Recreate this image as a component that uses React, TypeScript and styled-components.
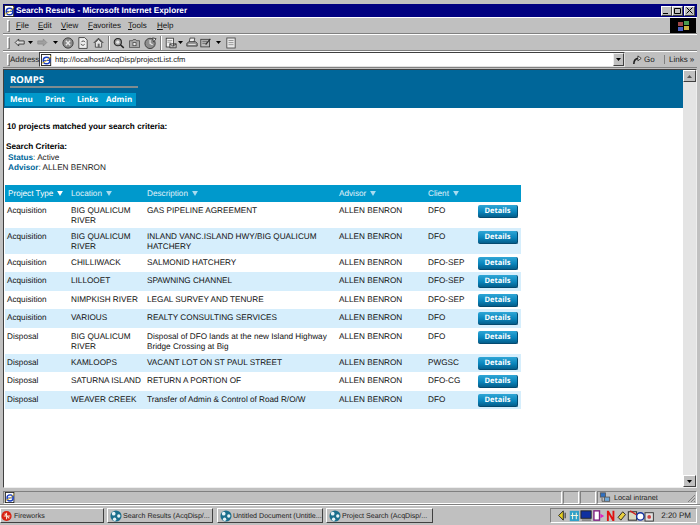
import React from 'react';
import styled, { createGlobalStyle, css } from 'styled-components';

const GlobalStyle = createGlobalStyle`
  html, body {
    margin: 0;
    padding: 0;
    background: #c0c0c0;
  }
  * {
    box-sizing: border-box;
  }
  svg {
    flex: none;
  }
`;

const raised = css`
  border: 1px solid;
  border-color: #ffffff #808080 #808080 #ffffff;
`;

const sunken = css`
  border: 1px solid;
  border-color: #808080 #ffffff #ffffff #808080;
`;

const Screen = styled.div`
  width: 700px;
  height: 525px;
  overflow: hidden;
  display: flex;
  flex-direction: column;
  background: #c0c0c0;
  font-family: 'Liberation Sans', Arial, sans-serif;
  font-size: 8.2px;
  color: #000;
  text-rendering: geometricPrecision;
`;

const Window = styled.div`
  flex: 1;
  display: flex;
  flex-direction: column;
  padding: 4px 3px 0;
  border-bottom: 1px solid #808080;
  min-height: 0;
`;

const TitleBar = styled.div`
  height: 13px;
  flex: none;
  background: #000080;
  color: #fff;
  font-weight: bold;
  font-size: 8.2px;
  display: flex;
  align-items: center;
  padding: 0 2px 0 1px;
`;

const TitleText = styled.span`
  flex: 1;
  white-space: nowrap;
`;

const CaptionButton = styled.div<{ $gap?: boolean }>`
  width: 11px;
  height: 10px;
  margin-left: ${p => (p.$gap ? 1 : 0)}px;
  background: #c0c0c0;
  border: 1px solid;
  border-color: #fff #404040 #404040 #fff;
  display: flex;
  align-items: center;
  justify-content: center;
`;

const CaptionRow = styled.div`
  display: flex;
`;

const Bar = styled.div<{ $h: number }>`
  height: ${p => p.$h}px;
  flex: none;
  display: flex;
  align-items: center;
  border-top: 1px solid #fff;
  border-bottom: 1px solid #808080;
`;

const Grip = styled.div`
  width: 3px;
  height: 12px;
  margin: 0 3px 0 4px;
  ${raised};
  flex: none;
`;

const MenuItem = styled.span<{ $w: number }>`
  width: ${p => p.$w}px;
  flex: none;
  font-size: 8px;
  color: #111;
  u {
    text-decoration: underline;
  }
`;

const MenuRow = styled.div`
  flex: 1;
  display: flex;
  align-items: center;
  padding-left: 3px;
`;

const Flag = styled.div`
  width: 26px;
  height: 15px;
  background: #000;
  flex: none;
  margin-right: 1px;
  display: flex;
  align-items: center;
  justify-content: center;
`;

const Tools = styled.div`
  display: flex;
  align-items: center;
`;

const ToolSlot = styled.div<{ $w: number }>`
  width: ${p => p.$w}px;
  flex: none;
  display: flex;
  justify-content: center;
  align-items: center;
`;

const ToolDivider = styled.div`
  width: 2px;
  height: 14px;
  margin: 0 3px 0 2px;
  border-left: 1px solid #808080;
  border-right: 1px solid #fff;
  flex: none;
`;

const AddressLabel = styled.span`
  width: 29px;
  margin-left: -3px;
  flex: none;
  font-size: 8px;
  color: #222;
`;

const AddressInput = styled.div`
  flex: 1;
  height: 15px;
  background: #fff;
  border: 1px solid;
  border-color: #404040 #e0e0e0 #e0e0e0 #404040;
  display: flex;
  align-items: center;
  font-size: 7.6px;
  color: #222;
  gap: 2px;
  padding-left: 1px;
`;

const AddressText = styled.span`
  flex: 1;
  white-space: nowrap;
`;

const DropButton = styled.div`
  width: 11px;
  height: 13px;
  background: #c0c0c0;
  border: 1px solid;
  border-color: #eee #404040 #404040 #eee;
  display: flex;
  align-items: center;
  justify-content: center;
`;

const GoBox = styled.div`
  width: 35px;
  margin-left: 2px;
  flex: none;
  display: flex;
  align-items: center;
  gap: 2px;
  padding-left: 6px;
  font-size: 8px;
  color: #222;
`;

const LinksBox = styled.div`
  width: 33px;
  flex: none;
  margin-left: 2px;
  display: flex;
  align-items: center;
  border-left: 1px solid #808080;
  font-size: 8px;
  color: #222;
  padding-left: 4px;
  gap: 2px;
`;

const Frame = styled.div`
  flex: 1;
  min-height: 0;
  margin-top: 1px;
  display: flex;
  border: 1px solid;
  border-color: #404040 #eee #eee #404040;
`;

const Page = styled.div`
  flex: 1;
  background: #fff;
  overflow: hidden;
  min-width: 0;
`;

const Banner = styled.div`
  height: 38px;
  background: #006699;
  color: #fff;
  padding-top: 5px;
`;

const Brand = styled.div`
  margin-left: 6px;
  width: 128px;
  height: 13px;
  font-size: 9.5px;
  font-weight: bold;
  line-height: 9px;
  border-bottom: 2px solid #7f8c90;
  font-family: 'Open Sans', 'Liberation Sans', sans-serif;
`;

const Nav = styled.div`
  margin: 5px 0 0 1px;
  width: 131px;
  height: 13px;
  background: #0099cc;
  display: flex;
  align-items: center;
  padding-left: 5px;
  font-size: 8px;
  font-weight: bold;
  font-family: 'Open Sans', 'Liberation Sans', sans-serif;
`;

const NavItem = styled.span<{ $w: number }>`
  width: ${p => p.$w}px;
  flex: none;
`;

const Content = styled.div`
  padding: 13px 1px 0 1px;
`;

const Matched = styled.div`
  font-weight: bold;
  line-height: 12px;
  padding-left: 2px;
`;

const CriteriaBlock = styled.div`
  margin-top: 9px;
  line-height: 10.5px;
  padding-left: 1px;
`;

const CriteriaTitle = styled.div`
  font-weight: bold;
`;

const CriteriaLine = styled.div`
  padding-left: 2px;
  color: #222;
  b {
    color: #006699;
  }
`;

const Table = styled.div`
  width: 516px;
  margin-top: 11px;
`;

const gridColumns = css`
  display: grid;
  grid-template-columns: 65px 76px 192px 89px 50px 44px;
`;

const HeadRow = styled.div`
  ${gridColumns};
  height: 17px;
  background: #0099cc;
  color: #fff;
  align-items: center;
`;

const HeadCell = styled.div<{ $first?: boolean }>`
  padding-left: ${p => (p.$first ? 3 : 1)}px;
  display: flex;
  align-items: center;
  gap: 4px;
  white-space: nowrap;
  color: ${p => (p.$first ? '#fff' : '#e0f2fa')};
`;

const Row = styled.div<{ $alt: boolean; $h: number }>`
  ${gridColumns};
  height: ${p => p.$h}px;
  padding-top: 3px;
  background: ${p => (p.$alt ? '#d6eefc' : '#ffffff')};
  line-height: 10px;
  color: #111;
`;

const Cell = styled.div<{ $first?: boolean }>`
  padding-left: ${p => (p.$first ? 2 : 1)}px;
  padding-top: 1px;
`;

const DetailsButton = styled.div`
  width: 40px;
  height: 13px;
  margin-left: 1px;
  border-radius: 2px;
  background: linear-gradient(#2fa6d6, #0a86bd 55%, #055f8c);
  border-right: 1px solid #044a70;
  border-bottom: 1px solid #044a70;
  color: #fff;
  font-size: 7.5px;
  font-weight: bold;
  display: flex;
  align-items: center;
  justify-content: center;
  font-family: 'Open Sans', 'Liberation Sans', sans-serif;
`;

const ScrollBar = styled.div`
  width: 13px;
  flex: none;
  display: flex;
  flex-direction: column;
  background-color: #e4e4e4;
`;

const ScrollTrack = styled.div`
  flex: 1;
`;

const ScrollButton = styled.div`
  height: 12px;
  background: #c0c0c0;
  border: 1px solid;
  border-color: #fff #404040 #404040 #fff;
  display: flex;
  align-items: center;
  justify-content: center;
`;

const StatusBar = styled.div`
  height: 13px;
  flex: none;
  margin-top: 3px;
  display: flex;
  align-items: stretch;
  gap: 1px;
`;

const StatusCell = styled.div<{ $w?: number }>`
  ${sunken};
  ${p => (p.$w ? `width: ${p.$w}px; flex: none;` : 'flex: 1;')}
  display: flex;
  align-items: center;
  gap: 3px;
  font-size: 7.3px;
  color: #222;
  white-space: nowrap;
  padding-left: 1px;
`;

const SizeGrip = styled.svg`
  margin-left: auto;
`;

const TaskBar = styled.div`
  height: 20px;
  flex: none;
  display: flex;
  align-items: center;
  border-top: 1px solid #fff;
`;

const TaskButton = styled.div<{ $w: number; $ml: number }>`
  width: ${p => p.$w}px;
  margin-left: ${p => p.$ml}px;
  height: 15px;
  flex: none;
  border: 1px solid;
  border-color: #fff #404040 #404040 #fff;
  display: flex;
  align-items: center;
  gap: 1px;
  padding-left: ${p => (p.$ml ? 2 : 0)}px;
  font-size: 7.1px;
  color: #222;
  white-space: nowrap;
  overflow: hidden;
`;

const Tray = styled.div`
  margin: 0 3px 0 auto;
  width: 147px;
  height: 15px;
  ${sunken};
  display: flex;
  align-items: center;
  padding-left: 3px;
  gap: 1px;
`;

const Clock = styled.span`
  margin-left: auto;
  margin-right: 5px;
  font-size: 8px;
  color: #222;
  white-space: nowrap;
`;

// small hand-drawn icons
const IeIcon = ({ size = 12 }: { size?: number }) => (
  <svg width={size} height={size} viewBox="0 0 13 13">
    <rect x="0.5" y="0.5" width="10" height="12" fill="#fff" stroke="#222" />
    <circle cx="6" cy="7" r="3.6" fill="none" stroke="#1a3fc0" strokeWidth="1.6" />
    <path d="M2.5 7h7" stroke="#1a3fc0" />
    <path d="M1 10Q7 8 11 2" stroke="#d8b020" fill="none" />
  </svg>
);

const Triangle = ({ dim }: { dim?: boolean }) => (
  <svg width="6" height="5" viewBox="0 0 7 6">
    <path d="M0 0h7L3.5 6z" fill={dim ? '#a8dcf0' : '#fff'} />
  </svg>
);

const BlackDown = () => (
  <svg width="5" height="3" viewBox="0 0 5 3">
    <path d="M0 0h5L2.5 3z" fill="#000" />
  </svg>
);

const BackIcon = () => (
  <svg width="11" height="9" viewBox="0 0 14 11">
    <path d="M6 1L1.5 5.5 6 10V7.5h7v-4H6z" fill="#d8d8d8" stroke="#222" />
  </svg>
);

const ForwardIcon = () => (
  <svg width="11" height="9" viewBox="0 0 14 11">
    <path d="M8 1l4.5 4.5L8 10V7.5H1v-4h7z" fill="#a0a0a0" stroke="#8a8a8a" />
  </svg>
);

const StopIcon = () => (
  <svg width="12" height="12" viewBox="0 0 14 14">
    <circle cx="7" cy="7" r="6" fill="#8a8a8a" stroke="#333" />
    <path d="M4.5 4.5l5 5M9.5 4.5l-5 5" stroke="#e8e8e8" strokeWidth="1.6" />
  </svg>
);

const RefreshIcon = () => (
  <svg width="10" height="12" viewBox="0 0 12 14">
    <path d="M1 .5h7l3 3v10H1z" fill="#eee" stroke="#333" />
    <path d="M4 6a2.5 2.5 0 0 1 4.5 0M8 8.5A2.5 2.5 0 0 1 3.5 8" stroke="#333" fill="none" />
  </svg>
);

const HomeIcon = () => (
  <svg width="11" height="11" viewBox="0 0 14 13">
    <path d="M1 7l6-6 6 6" fill="none" stroke="#222" strokeWidth="1.2" />
    <path d="M3 6.5V12.5h8V6.5L7 2.5z" fill="#e4e4e4" stroke="#333" />
    <rect x="6" y="8" width="2.5" height="4.5" fill="#666" />
  </svg>
);

const SearchIcon = () => (
  <svg width="12" height="12" viewBox="0 0 15 14">
    <circle cx="6" cy="6" r="4.5" fill="#9a9a9a" stroke="#222" strokeWidth="1.3" />
    <circle cx="6" cy="6" r="2" fill="#e8e8e8" />
    <path d="M9.5 9.5l4 3.5" stroke="#222" strokeWidth="2" />
  </svg>
);

const FolderIcon = () => (
  <svg width="11" height="10" viewBox="0 0 14 13">
    <path d="M.5 3.5h4l1-1.5h3l1 1.5h4v9H.5z" fill="#a8a8a8" stroke="#444" />
    <rect x="5" y="6" width="4" height="4" fill="#eee" stroke="#444" />
  </svg>
);

const HistoryIcon = () => (
  <svg width="13" height="12" viewBox="0 0 15 14">
    <circle cx="7" cy="7.5" r="6" fill="#8e8e8e" stroke="#333" />
    <path d="M7 3.5v4l3 1.5" stroke="#eee" strokeWidth="1.3" fill="none" />
    <path d="M10 1l4 1-3 4z" fill="#eee" stroke="#333" />
  </svg>
);

const MailIcon = () => (
  <svg width="12" height="12" viewBox="0 0 15 14">
    <rect x="1.5" y="1" width="9" height="11" fill="#f2f2f2" stroke="#333" />
    <path d="M3 4h6M3 6h5" stroke="#888" />
    <path d="M6 8h8v5H6zM6 8l4 3 4-3" fill="#bbb" stroke="#333" />
  </svg>
);

const PrintIcon = () => (
  <svg width="12" height="11" viewBox="0 0 15 13">
    <path d="M5 1h6l-1 5H4z" fill="#eee" stroke="#333" />
    <path d="M1 7.5L4 5.5h8l2 2v3.5H1z" fill="#999" stroke="#333" />
    <path d="M3 9h9" stroke="#eee" />
  </svg>
);

const EditIcon = () => (
  <svg width="12" height="11" viewBox="0 0 15 13">
    <rect x="1" y="2.5" width="11" height="9.5" fill="#bbb" stroke="#333" />
    <path d="M3 5h6M3 7.5h4" stroke="#555" />
    <path d="M7 9l6-7" stroke="#333" strokeWidth="1.6" />
  </svg>
);

const DiscussIcon = () => (
  <svg width="10" height="12" viewBox="0 0 12 14">
    <rect x="1" y="1" width="10" height="12" fill="#e8e8e8" stroke="#444" />
    <path d="M3 4h6M3 6.5h6M3 9h6" stroke="#888" />
  </svg>
);

const GoIcon = () => (
  <svg width="9" height="10" viewBox="0 0 11 12">
    <path d="M1 11C1 6 4 4 7 4" fill="none" stroke="#222" strokeWidth="2" />
    <path d="M6 1l4 3-4 3z" fill="#eee" stroke="#222" />
  </svg>
);

const WinFlag = () => (
  <svg width="13" height="12" viewBox="0 0 13 12">
    <rect x="1" y="2" width="5" height="4" fill="#a04848" />
    <rect x="7" y="1" width="5" height="4" fill="#4a9a50" />
    <rect x="1" y="7" width="5" height="4" fill="#4a60c0" />
    <rect x="7" y="6" width="5" height="4" fill="#c8b040" />
  </svg>
);

const DreamweaverIcon = () => (
  <svg width="12" height="12" viewBox="0 0 13 13">
    <circle cx="6.5" cy="6.5" r="6" fill="#1c6f8c" />
    <circle cx="4" cy="4" r="2" fill="#e8f4f8" />
    <circle cx="9.5" cy="6.5" r="1.8" fill="#e8f4f8" />
    <circle cx="5" cy="10" r="1.8" fill="#e8f4f8" />
  </svg>
);

const FireworksIcon = () => (
  <svg width="12" height="12" viewBox="0 0 13 13">
    <circle cx="6" cy="6.5" r="5.5" fill="#d82010" />
    <path d="M3 6.5h7M6 3v7M4 4l5 5" stroke="#f8e0d0" strokeWidth="1.2" />
  </svg>
);

const IntranetIcon = () => (
  <svg width="12" height="11" viewBox="0 0 13 13">
    <rect x="1" y="1" width="6" height="5" fill="#3070c0" stroke="#555" />
    <rect x="6" y="6" width="6" height="5" fill="#70a8d8" stroke="#555" />
    <path d="M3 7v4h3" stroke="#555" fill="none" />
  </svg>
);

const TrayIcons = () => (
  <svg width="104" height="13" viewBox="0 0 104 14">
    <path d="M1 7l5-5v10z" fill="#e8d020" stroke="#222" />
    <path d="M8 4v6" stroke="#222" />
    <rect x="13" y="2" width="10" height="11" fill="#30a0c8" />
    <path d="M16 4v7M20 4v7M14 7h8" stroke="#fffbe0" />
    <rect x="25" y="2" width="11" height="8" fill="#1030a0" stroke="#222" />
    <rect x="26" y="11" width="10" height="2" fill="#888" />
    <rect x="39" y="2" width="6" height="10" fill="#fff" stroke="#802080" strokeWidth="1.5" />
    <path d="M46 5l4 2.5-4 2.5z" fill="#e020c0" />
    <path d="M53 13V2h2l4 7V2h2v11h-2l-4-7v7z" fill="#e01010" />
    <path d="M65 9l5-6 3 3-5 6z" fill="#e8d040" stroke="#222" />
    <rect x="76" y="3" width="9" height="9" fill="#d8d8c0" stroke="#222" />
    <path d="M78 2l8 5" stroke="#d02020" strokeWidth="1.5" />
    <circle cx="89" cy="8" r="4" fill="#fff" stroke="#1030a0" strokeWidth="1.5" />
    <rect x="94" y="4" width="9" height="9" fill="#e0e0e0" stroke="#333" />
    <circle cx="98.5" cy="8.5" r="2" fill="#d04040" />
  </svg>
);

interface IProject {
  type: string
  location: string
  description: string
  advisor: string
  client: string
  height: number
}

const projects: IProject[] = [
  { type: 'Acquisition', location: 'BIG QUALICUM RIVER', description: 'GAS PIPELINE AGREEMENT', advisor: 'ALLEN BENRON', client: 'DFO', height: 26 },
  { type: 'Acquisition', location: 'BIG QUALICUM RIVER', description: 'INLAND VANC.ISLAND HWY/BIG QUALICUM HATCHERY', advisor: 'ALLEN BENRON', client: 'DFO', height: 26 },
  { type: 'Acquisition', location: 'CHILLIWACK', description: 'SALMONID HATCHERY', advisor: 'ALLEN BENRON', client: 'DFO-SEP', height: 18.5 },
  { type: 'Acquisition', location: 'LILLOOET', description: 'SPAWNING CHANNEL', advisor: 'ALLEN BENRON', client: 'DFO-SEP', height: 18.5 },
  { type: 'Acquisition', location: 'NIMPKISH RIVER', description: 'LEGAL SURVEY AND TENURE', advisor: 'ALLEN BENRON', client: 'DFO-SEP', height: 18.5 },
  { type: 'Acquisition', location: 'VARIOUS', description: 'REALTY CONSULTING SERVICES', advisor: 'ALLEN BENRON', client: 'DFO', height: 18.5 },
  { type: 'Disposal', location: 'BIG QUALICUM RIVER', description: 'Disposal of DFO lands at the new Island Highway Bridge Crossing at Big', advisor: 'ALLEN BENRON', client: 'DFO', height: 26 },
  { type: 'Disposal', location: 'KAMLOOPS', description: 'VACANT LOT ON ST PAUL STREET', advisor: 'ALLEN BENRON', client: 'PWGSC', height: 18.5 },
  { type: 'Disposal', location: 'SATURNA ISLAND', description: 'RETURN A PORTION OF', advisor: 'ALLEN BENRON', client: 'DFO-CG', height: 18.5 },
  { type: 'Disposal', location: 'WEAVER CREEK', description: 'Transfer of Admin & Control of Road R/O/W', advisor: 'ALLEN BENRON', client: 'DFO', height: 18.5 },
];

const menus = [
  { key: 'F', rest: 'ile', width: 22 },
  { key: 'E', rest: 'dit', width: 23 },
  { key: 'V', rest: 'iew', width: 27 },
  { key: 'F', rest: 'avorites', width: 40 },
  { key: 'T', rest: 'ools', width: 29 },
  { key: 'H', rest: 'elp', width: 30 },
];

const App = () => {
  return (
    <Screen>
      <GlobalStyle />
      <Window>
        <TitleBar>
          <IeIcon />
          <TitleText>Search Results - Microsoft Internet Explorer</TitleText>
          <CaptionRow>
            <CaptionButton>
              <svg width="7" height="7" viewBox="0 0 7 7"><path d="M0 6h5v1H0z" fill="#000" /></svg>
            </CaptionButton>
            <CaptionButton>
              <svg width="7" height="7" viewBox="0 0 7 7"><path d="M.5 1.5h6v5h-6z" fill="none" stroke="#000" /></svg>
            </CaptionButton>
            <CaptionButton $gap>
              <svg width="7" height="7" viewBox="0 0 7 7"><path d="M.5.5l6 6M6.5.5l-6 6" stroke="#000" /></svg>
            </CaptionButton>
          </CaptionRow>
        </TitleBar>
        <Bar $h={17}>
          <Grip />
          <MenuRow>
            {menus.map(m => (
              <MenuItem key={m.key + m.rest} $w={m.width}><u>{m.key}</u>{m.rest}</MenuItem>
            ))}
          </MenuRow>
          <Flag><WinFlag /></Flag>
        </Bar>
        <Bar $h={17}>
          <Grip />
          <Tools>
            <ToolSlot $w={12}><BackIcon /></ToolSlot>
            <ToolSlot $w={10}><BlackDown /></ToolSlot>
            <ToolSlot $w={15}><ForwardIcon /></ToolSlot>
            <ToolSlot $w={10}><BlackDown /></ToolSlot>
            <ToolSlot $w={15}><StopIcon /></ToolSlot>
            <ToolSlot $w={15}><RefreshIcon /></ToolSlot>
            <ToolSlot $w={16}><HomeIcon /></ToolSlot>
            <ToolDivider />
            <ToolSlot $w={12}><SearchIcon /></ToolSlot>
            <ToolSlot $w={18}><FolderIcon /></ToolSlot>
            <ToolSlot $w={15}><HistoryIcon /></ToolSlot>
            <ToolDivider />
            <ToolSlot $w={12}><MailIcon /></ToolSlot>
            <ToolSlot $w={6}><BlackDown /></ToolSlot>
            <ToolSlot $w={17}><PrintIcon /></ToolSlot>
            <ToolSlot $w={11}><EditIcon /></ToolSlot>
            <ToolSlot $w={14}><BlackDown /></ToolSlot>
            <ToolSlot $w={12}><DiscussIcon /></ToolSlot>
          </Tools>
        </Bar>
        <Bar $h={17}>
          <Grip />
          <AddressLabel>Address</AddressLabel>
          <AddressInput>
            <IeIcon />
            <AddressText>http://localhost/AcqDisp/projectList.cfm</AddressText>
            <DropButton><BlackDown /></DropButton>
          </AddressInput>
          <GoBox><GoIcon />Go</GoBox>
          <LinksBox>Links <span>»</span></LinksBox>
        </Bar>
        <Frame>
          <Page>
            <Banner>
              <Brand>ROMPS</Brand>
              <Nav>
                <NavItem $w={35}>Menu</NavItem>
                <NavItem $w={32}>Print</NavItem>
                <NavItem $w={29}>Links</NavItem>
                <NavItem $w={28}>Admin</NavItem>
              </Nav>
            </Banner>
            <Content>
              <Matched>10 projects matched your search criteria:</Matched>
              <CriteriaBlock>
                <CriteriaTitle>Search Criteria:</CriteriaTitle>
                <CriteriaLine><b>Status</b>: Active</CriteriaLine>
                <CriteriaLine><b>Advisor</b>: ALLEN BENRON</CriteriaLine>
              </CriteriaBlock>
              <Table>
                <HeadRow>
                  <HeadCell $first>Project Type <Triangle /></HeadCell>
                  <HeadCell>Location <Triangle dim /></HeadCell>
                  <HeadCell>Description <Triangle dim /></HeadCell>
                  <HeadCell>Advisor <Triangle dim /></HeadCell>
                  <HeadCell>Client <Triangle dim /></HeadCell>
                  <HeadCell />
                </HeadRow>
                {projects.map((p, i) => (
                  <Row key={p.description} $alt={i % 2 === 1} $h={p.height}>
                    <Cell $first>{p.type}</Cell>
                    <Cell>{p.location}</Cell>
                    <Cell>{p.description}</Cell>
                    <Cell>{p.advisor}</Cell>
                    <Cell>{p.client}</Cell>
                    <DetailsButton>Details</DetailsButton>
                  </Row>
                ))}
              </Table>
            </Content>
          </Page>
          <ScrollBar>
            <ScrollButton>
              <svg width="5" height="3" viewBox="0 0 5 3"><path d="M0 3h5L2.5 0z" fill="#555" /></svg>
            </ScrollButton>
            <ScrollTrack />
            <ScrollButton><BlackDown /></ScrollButton>
          </ScrollBar>
        </Frame>
        <StatusBar>
          <StatusCell><IeIcon size={11} /></StatusCell>
          <StatusCell $w={16} />
          <StatusCell $w={16} />
          <StatusCell $w={100}>
            <IntranetIcon />Local intranet
            <SizeGrip width="10" height="10" viewBox="0 0 10 10">
              <path d="M9 2L2 9M9 5L5 9M9 8L8 9" stroke="#808080" />
            </SizeGrip>
          </StatusCell>
        </StatusBar>
      </Window>
      <TaskBar>
        <TaskButton $w={104} $ml={0}><FireworksIcon />Fireworks</TaskButton>
        <TaskButton $w={106} $ml={3}><DreamweaverIcon />Search Results (AcqDisp/...</TaskButton>
        <TaskButton $w={106} $ml={4}><DreamweaverIcon />Untitled Document (Untitle...</TaskButton>
        <TaskButton $w={107} $ml={3}><DreamweaverIcon />Project Search (AcqDisp/...</TaskButton>
        <Tray>
          <TrayIcons />
          <Clock>2:20 PM</Clock>
        </Tray>
      </TaskBar>
    </Screen>
  );
};

export default App;
